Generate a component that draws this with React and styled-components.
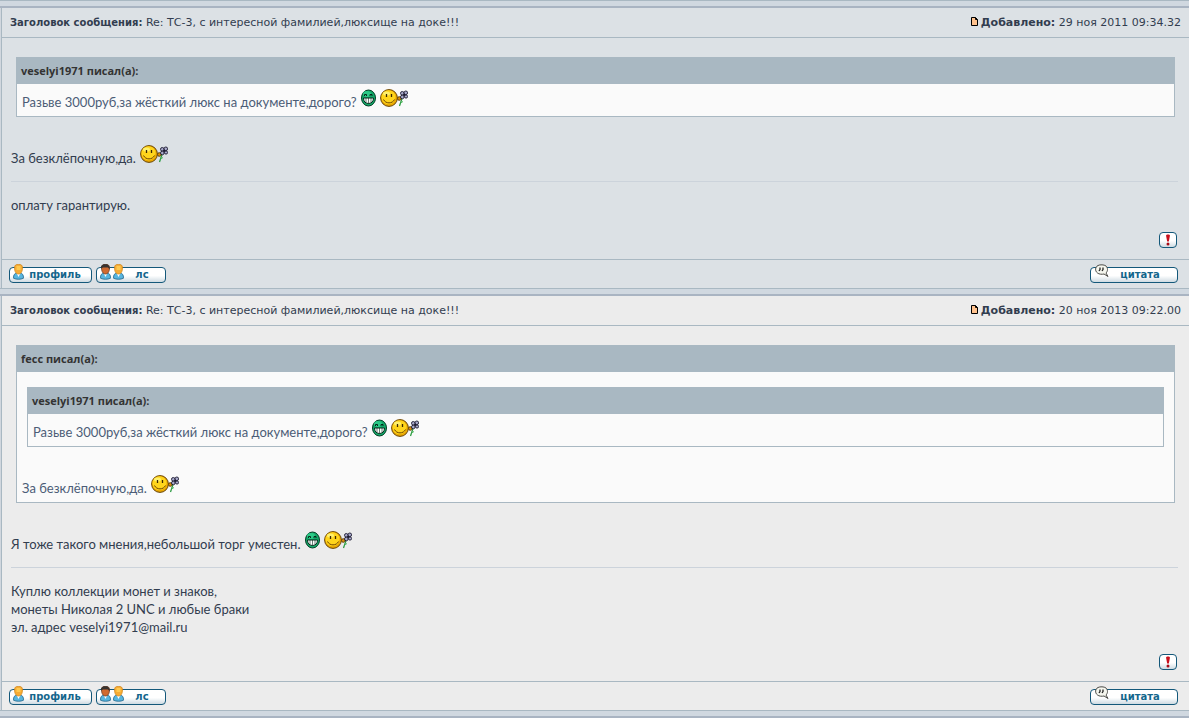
import React from 'react';
import styled, { createGlobalStyle } from 'styled-components';

const GlobalStyle = createGlobalStyle`
  body {
    background: #d1d7de;
    margin: 0;
  }
`;

const Topic = styled.main`
  color: #323d4f;
  font-family: Lato, 'Trebuchet MS', sans-serif;
  font-size: 13px;
  line-height: 18px;
`;

const Spacer = styled.div`
  background: #d0d8e0;
  border-top: 1px solid #a9b8c2;
  border-bottom: 2px solid #a9b4c2;
  height: 5px;
`;

const PostBox = styled.article`
  background: ${(props) => props.$background};
  border-left: 1px solid #a9b8c2;
  margin-left: 1px;
`;

const PostHeader = styled.header`
  align-items: center;
  border-bottom: 1px solid #a9b8c2;
  display: flex;
  font-family: 'DejaVu Sans', Verdana, sans-serif;
  font-size: 11px;
  justify-content: space-between;
  line-height: 29px;
  padding: 0 8px;
`;

const SubjectLabel = styled.b`
  font-size: 10px;
`;

const PostBody = styled.div`
  display: flow-root;
  padding: 9px 9px 11px 9px;
`;

const Quote = styled.blockquote`
  margin: 10px 5px 28px 5px;
`;

const QuoteTitle = styled.div`
  background: #a9b8c2;
  color: #333;
  font-family: 'Open Sans', 'Noto Sans', sans-serif;
  font-size: 11px;
  font-weight: bold;
  line-height: 27px;
  padding: 0 5px;
`;

const QuoteContent = styled.div`
  background: #fafafa;
  border: 1px solid #a9b8c2;
  border-top: none;
  color: #4c5d77;
  display: flow-root;
  padding: 5px;
`;

const Text = styled.p`
  margin: 0;

  svg {
    margin-left: 1px;
    vertical-align: baseline;
  }
`;

const Rule = styled.hr`
  border: none;
  border-top: 1px solid #ccd3db;
  margin: 14px 2px 14px 0;
`;

const ReportRow = styled.div`
  display: flex;
  justify-content: flex-end;
  margin: 18px 3px 0 0;
`;

const PostFooter = styled.footer`
  align-items: center;
  border-top: 1px solid #a9b8c2;
  display: flex;
  gap: 4px;
  height: 26px;
  padding: 2px 11px 0 7px;
`;

const Button = styled.button`
  background: linear-gradient(#fff 55%, #cfdbe2);
  border: 1px solid #14587a;
  border-radius: 4px;
  box-sizing: border-box;
  color: #14668c;
  cursor: pointer;
  font-family: 'DejaVu Sans', Verdana, sans-serif;
  font-size: 10px;
  font-weight: bold;
  height: 16px;
  line-height: 14px;
  padding: 0 0 0 ${(props) => props.$indent || 0}px;
  position: relative;
  width: ${(props) => props.$width}px;

  svg {
    left: 3px;
    position: absolute;
    top: -4px;
  }
`;

const QuoteButton = styled(Button)`
  margin-left: auto;
`;

const ReportButton = styled(Button)`
  svg {
    left: 5px;
    top: 1px;
  }
`;

const PageIcon = styled.svg`
  margin-right: 2px;
`;

function Grin() {
  return (
    <svg width='15' height='18' viewBox='0 0 15 18' role='img' aria-label=':mrgreen:'>
      <ellipse cx='7.5' cy='9' rx='7' ry='8' fill='#12a868' stroke='#043d25' />
      <ellipse cx='6' cy='5' rx='4' ry='3' fill='#2cc987' />
      <path d='M3.500 7V5.500h2V7M9 7V5.500h2V7' fill='none' stroke='#04291a' />
      <path d='M2.500 9h10c0 3.500-2 5.500-5 5.500S2.500 12.500 2.500 9z' fill='#fff' stroke='#04291a' />
      <path d='M5 9v5M7.500 9v5.500M10 9v5' stroke='#04291a' strokeWidth='0.6' />
    </svg>
  );
}

function Flower() {
  return (
    <svg width='28' height='18' viewBox='0 0 28 18' role='img' aria-label=':rose:'>
      <circle cx='9' cy='9' r='8.400' fill='#eba800' stroke='#684508' />
      <circle cx='8.500' cy='8.300' r='7' fill='#ffd51c' />
      <ellipse cx='6.500' cy='4.500' rx='3.500' ry='2' fill='#fff06b' />
      <path d='M6.500 5v3M11.500 5v3' stroke='#3c2802' strokeWidth='1.300' />
      <path d='M3.500 10.500c2 4.500 9 4.500 11 0' fill='none' stroke='#704300' />
      <path d='M22 9.500l-2.500 7.500' stroke='#24983a' strokeWidth='1.200' />
      <path d='M20.500 14l2.500-1.500' stroke='#51b960' />
      <circle cx='19.300' cy='9.500' r='1.800' fill='#d88f0b' stroke='#684508' />
      <g fill='#a9aacb' stroke='#1b1830' strokeWidth='0.9'>
        <circle cx='22.300' cy='4.300' r='1.800' />
        <circle cx='25.800' cy='3.800' r='1.800' />
        <circle cx='26' cy='7.500' r='1.600' />
        <circle cx='22.300' cy='8' r='1.800' />
      </g>
      <circle cx='24.200' cy='5.900' r='1.100' fill='#1b1830' />
    </svg>
  );
}

function Person({ x = 0, dark = false }) {
  return (
    <g transform={`translate(${x} 0)`}>
      <path d='M.6 14.300C0 11 2 9 4 9h3c2 0 4 2 3.400 5.300-3 1.300-6.800 1.300-9.800 0z' fill='#58b5df' stroke='#1c6289' strokeWidth='0.8' />
      <path d='M3.500 9l2 4L7.500 9z' fill='#fff' />
      <path
        d='M1.500 4c0-3 1.500-3.700 4-3.700S9.500 1 9.500 4c0 3.500-1.500 6-4 6s-4-2.500-4-6z'
        fill={dark ? '#d06a30' : '#f5ab35'}
        stroke={dark ? '#57301f' : '#cf8419'}
        strokeWidth='0.7'
      />
      {dark ? (
        <path d='M1 4.500V2.500C2 .5 4 0 6 .2S9.700 1.500 9.700 5.500L8 3.500H3z' fill='#383330' />
      ) : (
        <path d='M3.500 2h4v4h-4z' fill='#ffc94e' />
      )}
    </g>
  );
}

function Post({ post }) {
  return (
    <PostBox $background={post.background}>
      <PostHeader>
        <span>
          <SubjectLabel>Заголовок сообщения:</SubjectLabel> Re: ТС-3, с интересной фамилией,люксище на доке!!!
        </span>
        <span>
          <PageIcon width='8' height='9' viewBox='0 0 8 9' aria-hidden='true'>
            <path d='M.5.5h4l2 2v6h-6z' fill='#ffc28e' stroke='#000' />
            <path d='M4.500.5v2h2' fill='none' stroke='#000' />
          </PageIcon>
          <b>Добавлено:</b> {post.date}
        </span>
      </PostHeader>

      <PostBody>
        {post.content}
        <Rule />
        {post.signature.map((line) => (
          <Text key={line}>{line}</Text>
        ))}
        <ReportRow>
          <ReportButton $width={18} aria-label='Пожаловаться на это сообщение'>
            <svg width='6' height='12' viewBox='0 0 6 12' aria-hidden='true'>
              <path d='M1 1.500C1 0 5 0 5 1.500L3.800 7.500H2.200z' fill='#c9101c' />
              <circle cx='3' cy='10' r='1.500' fill='#a90c17' />
            </svg>
          </ReportButton>
        </ReportRow>
      </PostBody>

      <PostFooter>
        <Button $width={83} $indent={9}>
          <svg width='12' height='16' viewBox='0 0 12 16' aria-hidden='true'>
            <Person />
          </svg>
          профиль
        </Button>
        <Button $width={70} $indent={22}>
          <svg width='26' height='16' viewBox='0 0 26 16' aria-hidden='true'>
            <Person dark />
            <Person x={13} />
          </svg>
          лс
        </Button>
        <QuoteButton $width={88} $indent={12}>
          <svg width='16' height='16' viewBox='0 0 16 16' aria-hidden='true'>
            <path
              d='M4 1.500C6 .5 10 .5 12 2c2 2 2 5 0 7l2 3.500-4-2.500c-2 .5-5 .3-6.500-1C.8 7 1 3 4 1.500z'
              fill='#f5f6ee'
              stroke='#4b4b47'
            />
            <path d='M6 3.500v2l-1 1.500M9 3.500v2l-1 1.500' fill='none' stroke='#222' strokeWidth='1.300' />
          </svg>
          цитата
        </QuoteButton>
      </PostFooter>
    </PostBox>
  );
}

/**
 * the first quote is repeated inside the second post
 */
const veselyiQuote = (
  <Quote>
    <QuoteTitle>veselyi1971 писал(а):</QuoteTitle>
    <QuoteContent>
      <Text>
        Разьве 3000руб,за жёсткий люкс на документе,дорого? <Grin /> <Flower />
      </Text>
    </QuoteContent>
  </Quote>
);

const posts = [
  {
    id: 1,
    background: '#dce1e5',
    date: '29 ноя 2011 09:34.32',
    content: (
      <>
        {veselyiQuote}
        <Text>
          За безклёпочную,да. <Flower />
        </Text>
      </>
    ),
    signature: ['оплату гарантирую.'],
  },
  {
    id: 2,
    background: '#ececec',
    date: '20 ноя 2013 09:22.00',
    content: (
      <>
        <Quote>
          <QuoteTitle>fecc писал(а):</QuoteTitle>
          <QuoteContent>
            {veselyiQuote}
            <Text>
              За безклёпочную,да. <Flower />
            </Text>
          </QuoteContent>
        </Quote>
        <Text>
          Я тоже такого мнения,небольшой торг уместен. <Grin /> <Flower />
        </Text>
      </>
    ),
    signature: [
      'Куплю коллекции монет и знаков,',
      'монеты Николая 2 UNC и любые браки',
      'эл. адрес veselyi1971@mail.ru',
    ],
  },
];

export default function App() {
  return (
    <Topic>
      <GlobalStyle />
      <Spacer />
      {posts.map((post) => (
        <React.Fragment key={post.id}>
          <Post post={post} />
          <Spacer />
        </React.Fragment>
      ))}
    </Topic>
  );
}
